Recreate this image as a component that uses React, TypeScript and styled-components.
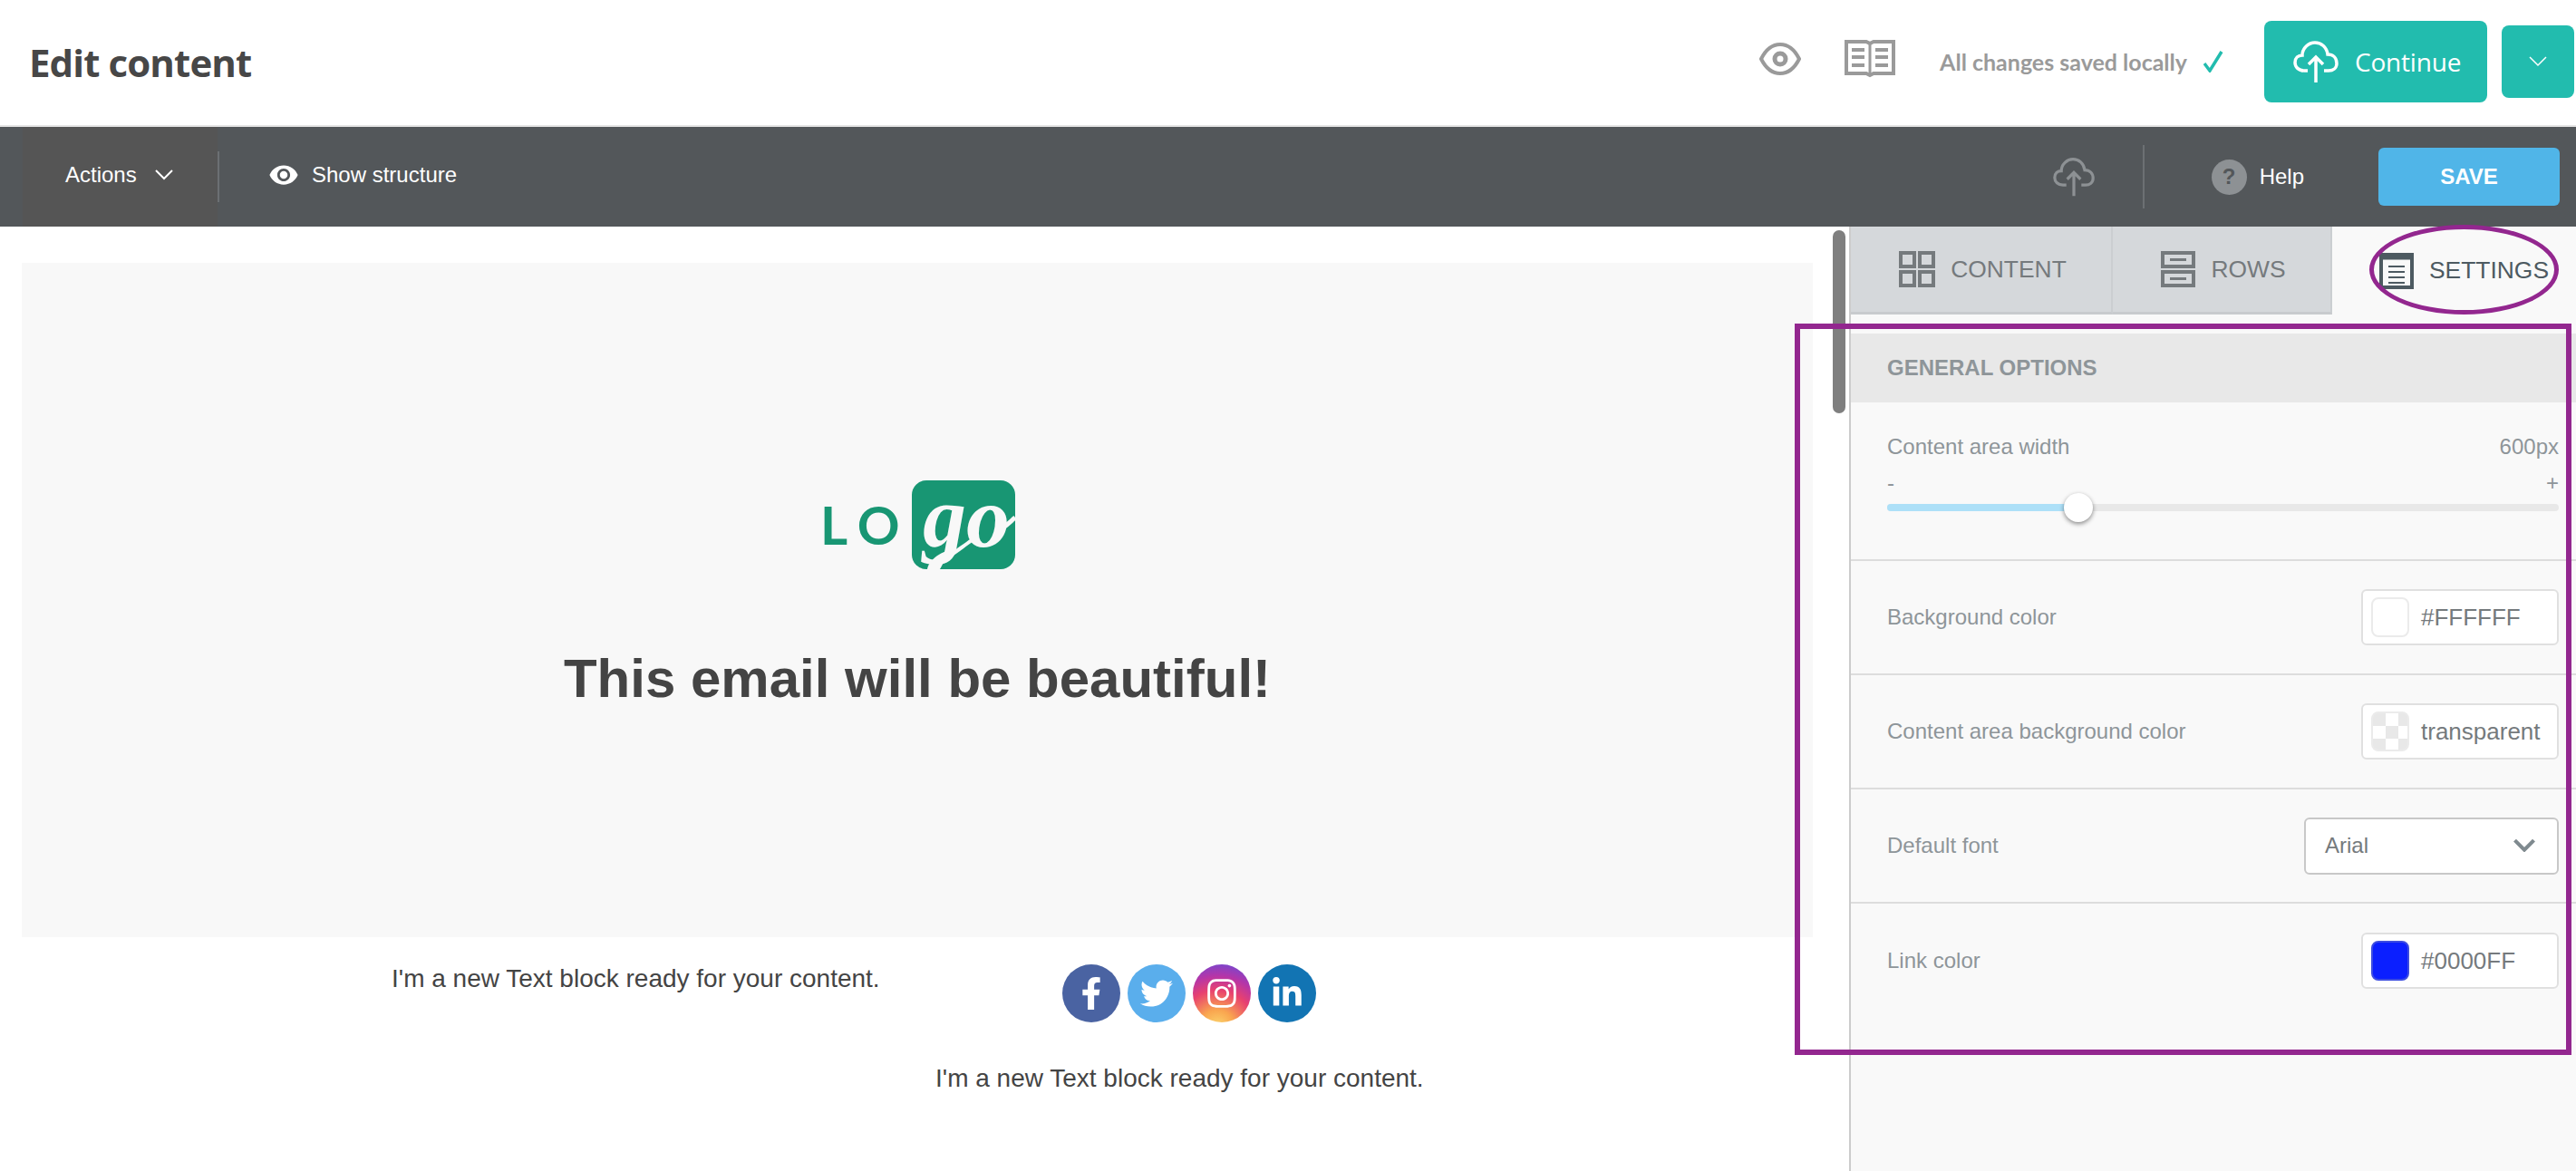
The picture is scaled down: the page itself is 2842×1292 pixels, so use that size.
import styled, { createGlobalStyle } from 'styled-components';
import { FaFacebookF, FaTwitter, FaInstagram, FaLinkedinIn } from 'react-icons/fa';
import { MdVisibility } from 'react-icons/md';

const GlobalStyle = createGlobalStyle`
  html, body {
    margin: 0;
    padding: 0;
    background: #fff;
    overflow: hidden;
  }
  * {
    box-sizing: border-box;
  }
`;

const Page = styled.div`
  width: 2842px;
  height: 1292px;
  display: flex;
  flex-direction: column;
  font-family: 'Liberation Sans', Arial, sans-serif;
  overflow: hidden;
`;

/* top header */
const TopBar = styled.header`
  height: 140px;
  flex: none;
  display: flex;
  align-items: center;
  padding: 0 2px 2px 32px;
  background: #fff;
  border-bottom: 2px solid #e5e5e5;
`;

const Title = styled.h1`
  margin: 0 auto 0 0;
  font-family: 'Open Sans', sans-serif;
  font-size: 42px;
  font-weight: 700;
  letter-spacing: -0.9px;
  color: #474747;
`;

const TopIcons = styled.div`
  display: flex;
  align-items: center;
  gap: 48px;
  margin: 0 49px 6px 0;
`;

const SavedNote = styled.div`
  display: flex;
  align-items: center;
  gap: 18px;
  margin-right: 45px;
  font-family: Lato, sans-serif;
  font-size: 25px;
  font-weight: 700;
  color: #9a9a9a;
`;

const ContinueButton = styled.button`
  width: 246px;
  height: 90px;
  display: flex;
  align-items: center;
  gap: 18px;
  padding: 0 0 0 32px;
  border: 0;
  border-radius: 8px;
  background: #22bcae;
  color: #fff;
  font-family: 'Open Sans', sans-serif;
  font-size: 28px;
  letter-spacing: -0.2px;
`;

const ContinueMenu = styled.button`
  width: 80px;
  height: 80px;
  margin-left: 16px;
  display: flex;
  align-items: center;
  justify-content: center;
  padding: 0;
  border: 0;
  border-radius: 8px;
  background: #22bcae;
`;

/* dark toolbar */
const ToolBar = styled.div`
  height: 110px;
  flex: none;
  display: flex;
  align-items: center;
  padding-left: 25px;
  background: #53575a;
  color: #fff;
  font-size: 24px;
`;

const ActionsMenu = styled.div`
  width: 215px;
  height: 110px;
  display: flex;
  align-items: center;
  gap: 20px;
  padding: 0 0 4px 47px;
  background: #555555;
`;

const ToolDivider = styled.div<{ $height: number }>`
  width: 2px;
  height: ${(p) => p.$height}px;
  background: #6c7073;
`;

const ToolLink = styled.div<{ $offset: number; $lift?: number }>`
  display: flex;
  align-items: center;
  gap: 14px;
  margin-left: ${(p) => p.$offset}px;
  padding-bottom: ${(p) => p.$lift ?? 0}px;
`;

const ToolSpacer = styled.div<{ $width?: number }>`
  flex: ${(p) => (p.$width ? 'none' : '1')};
  width: ${(p) => p.$width ?? 0}px;
`;

const HelpDot = styled.span`
  width: 39px;
  height: 39px;
  display: flex;
  align-items: center;
  justify-content: center;
  border-radius: 50%;
  background: #8d9194;
  color: #53575a;
  font-size: 24px;
  font-weight: 700;
`;

const SaveButton = styled.button`
  width: 200px;
  height: 64px;
  margin: 0 18px 0 82px;
  border: 0;
  border-radius: 6px;
  background: #50b5e8;
  color: #fff;
  font-family: 'Liberation Sans', Arial, sans-serif;
  font-size: 24px;
  font-weight: 700;
`;

const Main = styled.main`
  position: relative;
  flex: 1;
  display: flex;
  min-height: 0;
`;

/* email canvas */
const Canvas = styled.section`
  width: 2040px;
  flex: none;
  padding: 40px 40px 0 24px;
  background: #fff;
`;

const Hero = styled.div`
  height: 744px;
  display: flex;
  flex-direction: column;
  align-items: center;
  padding-top: 226px;
  background: #f8f8f8;
`;

const LogoMark = styled.svg`
  flex: none;
  display: block;
`;

const Headline = styled.h2`
  margin: 74px 0 0;
  font-size: 60px;
  line-height: 70px;
  font-weight: 700;
  color: #444;
`;

const EmailRow = styled.div`
  display: flex;
  margin-left: 368px;
  padding-top: 30px;
`;

const EmailText = styled.p`
  margin: 0;
  font-size: 28px;
  line-height: 32px;
  color: #444;
`;

const TextColumn = styled.div`
  width: 620px;
  padding-left: 40px;
`;

const SocialList = styled.div`
  display: flex;
  gap: 8px;
  margin-left: 160px;
`;

const SocialBadge = styled.span<{ $bg: string }>`
  width: 64px;
  height: 64px;
  display: flex;
  align-items: center;
  justify-content: center;
  border-radius: 50%;
  background: ${(p) => p.$bg};
  color: #fff;
  font-size: 36px;
`;

const ThirdRow = styled.div`
  padding: 46px 0 0 1008px;
`;

const ScrollThumb = styled.div`
  position: absolute;
  left: 2022px;
  top: 4px;
  width: 14px;
  height: 202px;
  border-radius: 7px;
  background: #7f7f7f;
`;

/* settings panel */
const Panel = styled.aside`
  flex: 1;
  display: flex;
  flex-direction: column;
  border-left: 2px solid #ccc;
  background: #f9f9f9;
`;

const Tabs = styled.div`
  height: 97px;
  flex: none;
  display: flex;
`;

const Tab = styled.div<{ $active?: boolean; $width: number }>`
  width: ${(p) => p.$width}px;
  display: flex;
  align-items: center;
  justify-content: center;
  gap: 17px;
  padding-left: ${(p) => (p.$active ? '22px' : '4px')};
  font-size: 26.4px;
  color: ${(p) => (p.$active ? '#4d5a61' : '#757a7d')};
  background: ${(p) => (p.$active ? 'transparent' : '#d5d8db')};
  border-right: ${(p) => (p.$active ? '0' : '2px solid #cbced1')};
  border-bottom: ${(p) => (p.$active ? '0' : '3px solid #c8cbce')};
`;

const SectionHeader = styled.div`
  height: 76px;
  flex: none;
  margin-top: 21px;
  display: flex;
  align-items: center;
  padding-left: 40px;
  background: #e8e8e8;
  color: #8e9599;
  font-size: 24px;
  font-weight: 700;
`;

const SliderBlock = styled.div`
  height: 175px;
  flex: none;
  padding: 35px 19px 0 40px;
  border-bottom: 2px solid #ddd;
  color: #8e9599;
  font-size: 24px;
`;

const SpreadLine = styled.div`
  display: flex;
  justify-content: space-between;
  line-height: 28px;
`;

const MinMax = styled(SpreadLine)`
  margin-top: 12px;
  font-size: 24px;
`;

const Track = styled.div`
  position: relative;
  height: 8px;
  margin-top: 9px;
  border-radius: 4px;
  background: #e8e8e8;
`;

const TrackFill = styled.div`
  height: 100%;
  border-radius: 4px 0 0 4px;
  background: #ade0f8;
`;

const Knob = styled.div`
  position: absolute;
  top: -12px;
  width: 32px;
  height: 32px;
  margin-left: -16px;
  border-radius: 50%;
  background: #fff;
  box-shadow: 0 2px 5px rgba(0, 0, 0, 0.45);
`;

const OptionRow = styled.div<{ $last?: boolean }>`
  height: 126px;
  flex: none;
  display: flex;
  align-items: center;
  justify-content: space-between;
  padding: 0 19px 0 40px;
  border-bottom: ${(p) => (p.$last ? '0' : '2px solid #ddd')};
  color: #8e9599;
  font-size: 24px;
`;

const ColorField = styled.div`
  width: 218px;
  height: 62px;
  display: flex;
  align-items: center;
  gap: 13px;
  padding-left: 9px;
  border: 2px solid #e0e0e0;
  border-radius: 6px;
  background: #fff;
  color: #757a7d;
  font-size: 26px;
`;

const Swatch = styled.span<{ $fill: string; $checker?: boolean }>`
  width: 42px;
  height: 44px;
  flex: none;
  border: 2px solid ${(p) => (p.$fill === '#0b1fff' ? '#3c4ce0' : '#ebebeb')};
  border-radius: 8px;
  background: ${(p) =>
    p.$checker
      ? 'repeating-conic-gradient(from 90deg, #e8e8e8 0 25%, #fff 0 50%) 0 0 / 28px 28px'
      : p.$fill};
`;

const SelectField = styled.div`
  width: 281px;
  height: 63px;
  display: flex;
  align-items: center;
  justify-content: space-between;
  padding: 0 24px 0 21px;
  border: 2px solid #c8c8c8;
  border-radius: 6px;
  background: #fff;
  color: #757a7d;
`;

/* purple hand drawn marks over the screenshot */
const MarkBox = styled.div`
  position: absolute;
  left: 1980px;
  top: 107px;
  width: 857px;
  height: 807px;
  border: 6px solid #93278f;
  pointer-events: none;
`;

const MarkEllipse = styled.div`
  position: absolute;
  left: 2614px;
  top: -2px;
  width: 209px;
  height: 99px;
  border: 5px solid #93278f;
  border-radius: 50%;
  pointer-events: none;
`;

const InstagramBg =
  'radial-gradient(circle at 42% 108%, #fbd86f 0%, #f9a54f 24%, #e8416f 52%, #b535a8 72%, #5a4fe0 100%)';

function CloudUpload({ size, color, stroke }: { size: number; color: string; stroke: number }) {
  return (
    <svg width={size} height={size} viewBox="0 0 50 50" fill="none" stroke={color} strokeWidth={stroke}>
      <path d="M16 35H12C6 35 2 31 2 26C2 21 5.500 18 10 18C10 10 17 4 24 4C31 4 37 9 38 17C44 17 48 21 48 27C48 32 44 35 39 35H34" />
      <path d="M25 48V20M17 28L25 20L33 28" />
    </svg>
  );
}

function Chevron({ width, color, stroke }: { width: number; color: string; stroke: number }) {
  return (
    <svg width={width} height={width / 2 + 2} viewBox="0 0 20 12" fill="none" stroke={color} strokeWidth={stroke}>
      <path d="M1 1L10 10L19 1" />
    </svg>
  );
}

function Logo() {
  return (
    <LogoMark width="216" height="124" viewBox="-4 -14 216 124">
      <rect x="98" y="0" width="114" height="98" rx="16" fill="#189673" />
      <text x="-3" y="71" fontFamily="Lato, sans-serif" fontWeight="700" fontSize="58" letterSpacing="12" fill="#189673">
        LO
      </text>
      <text x="110" y="73" fontFamily="'Liberation Serif', serif" fontStyle="italic" fontWeight="700" fontSize="96" fill="#f8f8f8">
        go
      </text>
      <path d="M190 58C198 54 205 47 212 41" fill="none" stroke="#f8f8f8" strokeWidth="5" />
      <path d="M142 82C150 76 156 72 164 66" fill="none" stroke="#f8f8f8" strokeWidth="4" />
      <path d="M116 108C111 96 120 84 136 78C134 92 128 104 116 108Z" fill="#f8f8f8" />
    </LogoMark>
  );
}

const SOCIALS = [
  { bg: '#4a63a2', icon: <FaFacebookF /> },
  { bg: '#5aaeec', icon: <FaTwitter /> },
  { bg: InstagramBg, icon: <FaInstagram /> },
  { bg: '#1274b3', icon: <FaLinkedinIn /> },
];

const CONTENT_TEXT = "I'm a new Text block ready for your content.";
const SLIDER_VALUE = 211;

function App() {
  return (
    <Page>
      <GlobalStyle />
      <TopBar>
        <Title>Edit content</Title>
        <TopIcons>
          <svg width="46" height="36" viewBox="0 0 46 36" fill="none" stroke="#9a9a9a" strokeWidth="4">
            <path d="M2 18C7 8 14 2 23 2C32 2 39 8 44 18C39 28 32 34 23 34C14 34 7 28 2 18Z" />
            <circle cx="23" cy="18" r="6" strokeWidth="5" />
          </svg>
          <svg width="56" height="42" viewBox="0 0 56 42" fill="none" stroke="#9a9a9a">
            <path d="M2 2H24L28 4L32 2H54V37H32L28 39L24 37H2Z" strokeWidth="4" />
            <path d="M28 4V37" strokeWidth="3" />
            <path d="M8 11H22M8 19H22M8 28H22M34 11H48M34 19H48M34 28H48" strokeWidth="4" />
          </svg>
        </TopIcons>
        <SavedNote>
          All changes saved locally
          <svg width="22" height="24" viewBox="0 0 22 24" fill="none" stroke="#22bcae" strokeWidth="3.500">
            <path d="M1 14L7 22L20 1" />
          </svg>
        </SavedNote>
        <ContinueButton>
          <CloudUpload size={50} color="#fff" stroke={3.5} />
          Continue
        </ContinueButton>
        <ContinueMenu>
          <Chevron width={20} color="#fff" stroke={1.5} />
        </ContinueMenu>
      </TopBar>

      <ToolBar>
        <ActionsMenu>
          Actions
          <Chevron width={20} color="#fff" stroke={2} />
        </ActionsMenu>
        <ToolDivider $height={56} />
        <ToolLink $offset={54} $lift={4}>
          <MdVisibility size={34} />
          Show structure
        </ToolLink>
        <ToolSpacer />
        <CloudUpload size={46} color="#8d9194" stroke={3.5} />
        <ToolSpacer $width={53} />
        <ToolDivider $height={70} />
        <ToolLink $offset={74}>
          <HelpDot>?</HelpDot>
          Help
        </ToolLink>
        <SaveButton>SAVE</SaveButton>
      </ToolBar>

      <Main>
        <Canvas>
          <Hero>
            <Logo />
            <Headline>This email will be beautiful!</Headline>
          </Hero>
          <EmailRow>
            <TextColumn>
              <EmailText>{CONTENT_TEXT}</EmailText>
            </TextColumn>
            <SocialList>
              {SOCIALS.map((s) => (
                <SocialBadge key={s.bg} $bg={s.bg}>
                  {s.icon}
                </SocialBadge>
              ))}
            </SocialList>
          </EmailRow>
          <ThirdRow>
            <EmailText>{CONTENT_TEXT}</EmailText>
          </ThirdRow>
        </Canvas>
        <ScrollThumb />

        <Panel>
          <Tabs>
            <Tab $width={289}>
              <svg width="40" height="40" viewBox="0 0 40 40" fill="none" stroke="#757a7d" strokeWidth="4">
                <rect x="2" y="2" width="15" height="15" />
                <rect x="23" y="2" width="15" height="15" />
                <rect x="2" y="23" width="15" height="15" />
                <rect x="23" y="23" width="15" height="15" />
              </svg>
              CONTENT
            </Tab>
            <Tab $width={242}>
              <svg width="38" height="40" viewBox="0 0 38 40" fill="none" stroke="#757a7d" strokeWidth="4">
                <rect x="2" y="2" width="34" height="15" />
                <rect x="2" y="23" width="34" height="15" />
                <path d="M10 9.500H28M10 30.500H28" strokeWidth="3" />
              </svg>
              ROWS
            </Tab>
            <Tab $width={269} $active>
              <svg width="38" height="40" viewBox="0 0 38 40" fill="none" stroke="#4d5a61">
                <rect x="2" y="2" width="34" height="36" strokeWidth="4" />
                <path d="M2 5H36" strokeWidth="5" />
                <path d="M10 15H28M10 21H28M10 27H28M10 33H28" strokeWidth="2" />
              </svg>
              SETTINGS
            </Tab>
          </Tabs>

          <SectionHeader>GENERAL OPTIONS</SectionHeader>
          <SliderBlock>
            <SpreadLine>
              <span>Content area width</span>
              <span>600px</span>
            </SpreadLine>
            <MinMax>
              <span>-</span>
              <span>+</span>
            </MinMax>
            <Track>
              <TrackFill style={{ width: SLIDER_VALUE }} />
              <Knob style={{ left: SLIDER_VALUE }} />
            </Track>
          </SliderBlock>

          <OptionRow>
            Background color
            <ColorField>
              <Swatch $fill="#ffffff" />
              #FFFFFF
            </ColorField>
          </OptionRow>
          <OptionRow>
            Content area background color
            <ColorField>
              <Swatch $fill="transparent" $checker />
              transparent
            </ColorField>
          </OptionRow>
          <OptionRow>
            Default font
            <SelectField>
              Arial
              <Chevron width={24} color="#7f8a8f" stroke={3.500} />
            </SelectField>
          </OptionRow>
          <OptionRow $last>
            Link color
            <ColorField>
              <Swatch $fill="#0b1fff" />
              #0000FF
            </ColorField>
          </OptionRow>
        </Panel>

        <MarkBox />
        <MarkEllipse />
      </Main>
    </Page>
  );
}

export default App;
